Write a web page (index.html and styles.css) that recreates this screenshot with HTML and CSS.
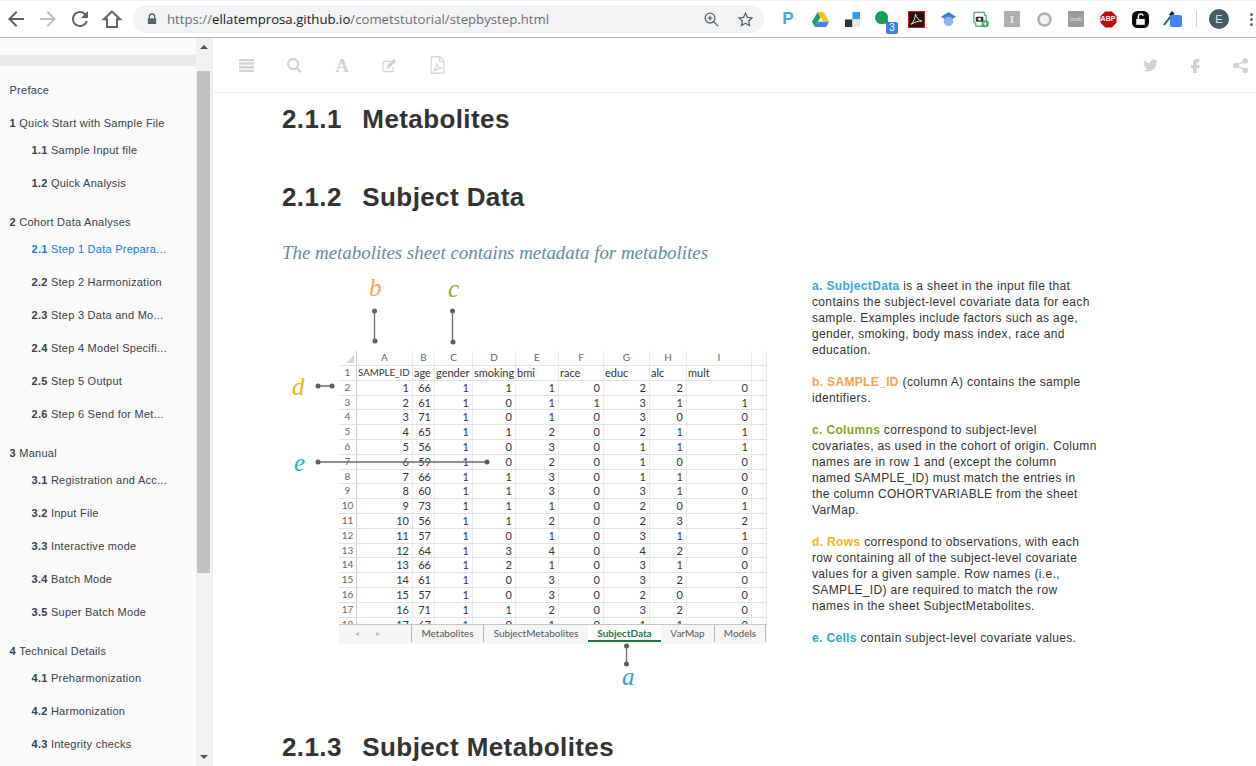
FILE: index.html
```html
<!DOCTYPE html>
<html lang="en">
<head>
    <meta charset="UTF-8">
    <meta name="viewport" content="width=device-width, initial-scale=1.0">
    <title>Step by step</title>
    <link rel="stylesheet" href="styles.css">
</head>
<body>
    <header class="browser-bar">
        <div class="nav-buttons">
            <svg class="nav-icon" viewBox="0 0 24 24"><path d="M20 11H7.83l5.59-5.59L12 4l-8 8 8 8 1.41-1.41L7.83 13H20v-2z"/></svg>
            <svg class="nav-icon nav-off" viewBox="0 0 24 24"><path d="M4 11h12.17l-5.59-5.59L12 4l8 8-8 8-1.41-1.41L16.17 13H4v-2z"/></svg>
            <svg class="nav-icon" viewBox="0 0 24 24"><path d="M17.65 6.35A7.958 7.958 0 0 0 12 4c-4.42 0-7.99 3.58-7.99 8s3.57 8 7.99 8c3.73 0 6.84-2.55 7.73-6h-2.08A5.99 5.99 0 0 1 12 18c-3.31 0-6-2.69-6-6s2.69-6 6-6c1.66 0 3.14.69 4.22 1.78L13 11h7V4l-2.35 2.35z"/></svg>
            <svg class="nav-icon" viewBox="0 0 24 24"><path class="home-line" d="M12 4.5 3.8 12.2H7V20h10v-7.8h3.2z"/></svg>
        </div>
        <div class="omnibox">
            <svg class="lock" viewBox="0 0 12 14"><path d="M2 6V4.2a4 4 0 0 1 8 0V6h1v7H1V6zm1.6 0h4.8V4.2a2.4 2.4 0 0 0-4.8 0z"/></svg>
            <span class="url"><span class="url-dim">https://</span>ellatemprosa.github.io<span class="url-dim">/cometstutorial/stepbystep.html</span></span>
            <svg class="omni-icon omni-zoom" viewBox="0 0 18 18"><circle cx="7.5" cy="7.5" r="5.2"/><path d="M11.4 11.4 16 16M5 7.5h5M7.5 5v5"/></svg>
            <svg class="omni-icon" viewBox="0 0 24 24"><path d="M12 3l2.8 5.9 6.4.8-4.7 4.4 1.2 6.4L12 17.3l-5.7 3.2 1.2-6.4-4.7-4.4 6.4-.8z"/></svg>
        </div>
        <div class="extensions">
            <span class="ext ext-p">P</span>
            <span class="ext"><svg viewBox="0 0 18 16"><path fill="#1ea362" d="M6 0 0 10.5 3 16l6-10.500z"/><path fill="#ffc107" d="M6 0h6l6 10.500h-6z"/><path fill="#4285f4" d="M3 16h12l3-5.500H6z"/></svg></span>
            <span class="ext"><svg viewBox="0 0 18 18"><rect x="9" y="1" width="8" height="8" fill="#2f9bf5"/><rect x="1" y="9" width="8" height="8" fill="#333"/><rect x="9" y="9" width="8" height="8" fill="#e6e8ea"/></svg></span>
            <span class="ext"><svg class="ext-green" viewBox="0 0 16 16"><circle cx="7" cy="7" r="7" fill="#159e58"/><path d="M9 12l5 4V9z" fill="#159e58"/></svg><b class="ext-badge">3</b></span>
            <span class="ext"><svg viewBox="0 0 16 16"><rect x=".5" y=".5" width="15" height="15" fill="#2b1210" stroke="#b3261a"/><path d="M3 12.500C5 11 7 6 7 3c1 3 2.500 5.500 6 6.500-3 0-6 .5-10 3z" fill="none" stroke="#eee" stroke-width=".9"/></svg></span>
            <span class="ext"><svg viewBox="0 0 18 18"><path fill="#3f7de0" d="M9 1l8 5-8 5-8-5z"/><circle cx="9" cy="11" r="5" fill="#8fb2ee"/></svg></span>
            <span class="ext"><svg viewBox="0 0 18 18"><path d="M2 1.500h11v2.500l2 1v6M13 16H4V13L2 12V1.500" fill="none" stroke="#3bab62" stroke-width="1.200"/><rect x="4" y="6" width="8" height="5.500" rx="1" fill="#333"/><circle cx="8" cy="8.700" r="1.500" fill="#fff"/><circle cx="14" cy="13.500" r="3.800" fill="#2fa65a"/><path d="M14 11.500v4M12 13.500h4" stroke="#fff" stroke-width="1.200"/></svg></span>
            <span class="ext"><i class="ext-box">I</i></span>
            <span class="ext"><svg viewBox="0 0 16 16"><circle cx="8" cy="8" r="5.700" fill="#f1f1f1" stroke="#b0b0b0" stroke-width="2.400"/></svg></span>
            <span class="ext"><i class="ext-box ext-md">(md)</i></span>
            <span class="ext"><svg viewBox="0 0 18 18"><path fill="#c20a0a" d="M5.500.5h7l5 5v7l-5 5h-7l-5-5v-7z"/></svg><b class="ext-abp">ABP</b></span>
            <span class="ext"><svg viewBox="0 0 16 16"><rect width="16" height="16" rx="5" fill="#0b0b0b"/><rect x="4" y="7.500" width="8" height="5.500" fill="#fff"/><path d="M6 7.500V5a2.300 2.300 0 0 1 4.500-.5" fill="none" stroke="#fff" stroke-width="1.300"/></svg></span>
            <span class="ext"><svg class="ext-dropper" viewBox="0 0 12 16"><path d="M1 15 8 6" stroke="#2d6a3f" stroke-width="2"/><path d="M6 4.500 9 1l2.500 2.500L8.500 7z" fill="#222"/></svg><b class="ext-blue"></b></span>
            <span class="ext-sep"></span>
            <span class="avatar">E</span>
            <span class="menu-dots"><i></i><i></i><i></i></span>
        </div>
    </header>

    <div class="page">
        <nav class="sidebar">
            <div class="toc">
                <div class="toc-band"></div>
                <a class="chapter">Preface</a>
                <a class="chapter"><b>1</b> Quick Start with Sample File</a>
                <a class="section"><b>1.1</b> Sample Input file</a>
                <a class="section"><b>1.2</b> Quick Analysis</a>
                <a class="chapter"><b>2</b> Cohort Data Analyses</a>
                <a class="section active"><b>2.1</b> Step 1 Data Prepara...</a>
                <a class="section"><b>2.2</b> Step 2 Harmonization</a>
                <a class="section"><b>2.3</b> Step 3 Data and Mo...</a>
                <a class="section"><b>2.4</b> Step 4 Model Specifi...</a>
                <a class="section"><b>2.5</b> Step 5 Output</a>
                <a class="section"><b>2.6</b> Step 6 Send for Met...</a>
                <a class="chapter"><b>3</b> Manual</a>
                <a class="section"><b>3.1</b> Registration and Acc...</a>
                <a class="section"><b>3.2</b> Input File</a>
                <a class="section"><b>3.3</b> Interactive mode</a>
                <a class="section"><b>3.4</b> Batch Mode</a>
                <a class="section"><b>3.5</b> Super Batch Mode</a>
                <a class="chapter"><b>4</b> Technical Details</a>
                <a class="section"><b>4.1</b> Preharmonization</a>
                <a class="section"><b>4.2</b> Harmonization</a>
                <a class="section"><b>4.3</b> Integrity checks</a>
            </div>
            <div class="scrollbar">
                <span class="arrow-up"></span>
                <span class="thumb"></span>
                <span class="arrow-down"></span>
            </div>
        </nav>

        <main class="book">
            <div class="book-bar">
                <div class="bar-group">
                    <svg class="bar-icon" viewBox="0 0 16 14"><path d="M0 0h16v2.500H0zM0 3.800h16v2.500H0zM0 7.600h16v2.500H0zM0 11.400h16v2.500H0z"/></svg>
                    <svg class="bar-icon" viewBox="0 0 16 16"><path fill-rule="evenodd" d="M6.500 0a6.500 6.500 0 0 1 5.200 10.400l4 4-1.700 1.600-4-4A6.500 6.500 0 1 1 6.500 0zm0 2.300a4.200 4.200 0 1 0 0 8.400 4.200 4.200 0 0 0 0-8.400z"/></svg>
                    <span class="bar-letter">A</span>
                    <svg class="bar-icon" viewBox="0 0 16 16"><path d="M12 9.500V13a1.500 1.500 0 0 1-1.500 1.500h-8A1.500 1.500 0 0 1 1 13V5a1.500 1.500 0 0 1 1.500-1.500H9" fill="none" stroke="#d2d2d2" stroke-width="1.300"/><path d="M5.500 8 12.500 1l2.500 2.500-7 7-3 .5z"/></svg>
                    <svg class="bar-icon bar-pdf" viewBox="0 0 14 17"><path d="M1 .8h8l4 4v11.400H1z" fill="none" stroke="#d2d2d2" stroke-width="1.100"/><path d="M9 1v4h4M3 14c2-1.500 3-4 3.200-7 .6 2.500 2 4 4.800 4.500-3 0-5.500 1-8 2.500z" fill="none" stroke="#d2d2d2"/></svg>
                </div>
                <div class="bar-group bar-right">
                    <svg class="bar-icon" viewBox="0 0 24 24"><path d="M23.953 4.570a10 10 0 0 1-2.825.775 4.958 4.958 0 0 0 2.163-2.723c-.951.555-2.005.959-3.127 1.184a4.920 4.920 0 0 0-8.384 4.482C7.690 8.095 4.067 6.130 1.640 3.162a4.822 4.822 0 0 0-.666 2.475c0 1.710.870 3.213 2.188 4.096a4.904 4.904 0 0 1-2.228-.616v.060a4.923 4.923 0 0 0 3.946 4.827 4.996 4.996 0 0 1-2.212.085 4.936 4.936 0 0 0 4.604 3.417 9.867 9.867 0 0 1-6.102 2.105c-.390 0-.779-.023-1.170-.067a13.995 13.995 0 0 0 7.557 2.209c9.053 0 13.998-7.496 13.998-13.985 0-.210 0-.420-.015-.630A9.935 9.935 0 0 0 24 4.590z"/></svg>
                    <svg class="bar-icon" viewBox="0 0 24 24"><path d="M14 7h4V1h-4c-3.500 0-6 2.600-6 6v4H5v5h3v8h6v-8h4l.7-5H14V8c0-.6.400-1 1-1z"/></svg>
                    <svg class="bar-icon" viewBox="0 0 16 16"><circle cx="13" cy="3" r="3"/><circle cx="3" cy="8" r="3"/><circle cx="13" cy="13" r="3"/><path d="M13 3 3 8l10 5" fill="none" stroke="#d2d2d2" stroke-width="1.500"/></svg>
                </div>
            </div>

            <div class="book-body">
                <h2 class="first">2.1.1<span class="num-gap"></span>Metabolites</h2>
                <h2>2.1.2<span class="num-gap"></span>Subject Data</h2>
                <p class="lead">The metabolites sheet contains metadata for metabolites</p>

                <div class="explainer">
                    <figure class="figure">
                        <span class="tag tag-a">a</span>
                        <span class="tag tag-b">b</span>
                        <span class="tag tag-c">c</span>
                        <span class="tag tag-d">d</span>
                        <span class="tag tag-e">e</span>

                        <div class="sheet">
                            <div class="sheet-grid">
                                <div class="row head"><span class="rh corner"></span><span>A</span><span>B</span><span>C</span><span>D</span><span>E</span><span>F</span><span>G</span><span>H</span><span>I</span><span></span></div>
                                <div class="row names"><span class="rh">1</span><span class="caps">SAMPLE_ID</span><span>age</span><span>gender</span><span>smoking</span><span>bmi</span><span>race</span><span>educ</span><span>alc</span><span>mult</span><span></span></div>
                                <div class="row"><span class="rh">2</span><span>1</span><span>66</span><span>1</span><span>1</span><span>1</span><span>0</span><span>2</span><span>2</span><span>0</span><span></span></div>
                                <div class="row"><span class="rh">3</span><span>2</span><span>61</span><span>1</span><span>0</span><span>1</span><span>1</span><span>3</span><span>1</span><span>1</span><span></span></div>
                                <div class="row"><span class="rh">4</span><span>3</span><span>71</span><span>1</span><span>0</span><span>1</span><span>0</span><span>3</span><span>0</span><span>0</span><span></span></div>
                                <div class="row"><span class="rh">5</span><span>4</span><span>65</span><span>1</span><span>1</span><span>2</span><span>0</span><span>2</span><span>1</span><span>1</span><span></span></div>
                                <div class="row"><span class="rh">6</span><span>5</span><span>56</span><span>1</span><span>0</span><span>3</span><span>0</span><span>1</span><span>1</span><span>1</span><span></span></div>
                                <div class="row"><span class="rh">7</span><span>6</span><span>59</span><span>1</span><span>0</span><span>2</span><span>0</span><span>1</span><span>0</span><span>0</span><span></span></div>
                                <div class="row"><span class="rh">8</span><span>7</span><span>66</span><span>1</span><span>1</span><span>3</span><span>0</span><span>1</span><span>1</span><span>0</span><span></span></div>
                                <div class="row"><span class="rh">9</span><span>8</span><span>60</span><span>1</span><span>1</span><span>3</span><span>0</span><span>3</span><span>1</span><span>0</span><span></span></div>
                                <div class="row"><span class="rh">10</span><span>9</span><span>73</span><span>1</span><span>1</span><span>1</span><span>0</span><span>2</span><span>0</span><span>1</span><span></span></div>
                                <div class="row"><span class="rh">11</span><span>10</span><span>56</span><span>1</span><span>1</span><span>2</span><span>0</span><span>2</span><span>3</span><span>2</span><span></span></div>
                                <div class="row"><span class="rh">12</span><span>11</span><span>57</span><span>1</span><span>0</span><span>1</span><span>0</span><span>3</span><span>1</span><span>1</span><span></span></div>
                                <div class="row"><span class="rh">13</span><span>12</span><span>64</span><span>1</span><span>3</span><span>4</span><span>0</span><span>4</span><span>2</span><span>0</span><span></span></div>
                                <div class="row"><span class="rh">14</span><span>13</span><span>66</span><span>1</span><span>2</span><span>1</span><span>0</span><span>3</span><span>1</span><span>0</span><span></span></div>
                                <div class="row"><span class="rh">15</span><span>14</span><span>61</span><span>1</span><span>0</span><span>3</span><span>0</span><span>3</span><span>2</span><span>0</span><span></span></div>
                                <div class="row"><span class="rh">16</span><span>15</span><span>57</span><span>1</span><span>0</span><span>3</span><span>0</span><span>2</span><span>0</span><span>0</span><span></span></div>
                                <div class="row"><span class="rh">17</span><span>16</span><span>71</span><span>1</span><span>1</span><span>2</span><span>0</span><span>3</span><span>2</span><span>0</span><span></span></div>
                                <div class="row"><span class="rh">18</span><span>17</span><span>67</span><span>1</span><span>0</span><span>1</span><span>0</span><span>1</span><span>1</span><span>0</span><span></span></div>
                            </div>
                            <div class="tabs">
                                <span class="tab-nav"><i>&#9666;</i><i>&#9656;</i></span>
                                <span class="tab tab-metabolites">Metabolites</span>
                                <span class="tab tab-subjectmeta">SubjectMetabolites</span>
                                <span class="tab tab-active">SubjectData</span>
                                <span class="tab tab-varmap">VarMap</span>
                                <span class="tab tab-models">Models</span>
                            </div>
                        </div>

                        <!-- callout lines, in figure coordinates -->
                        <svg class="callouts" viewBox="0 0 530 425">
                            <path d="M92.500 42v30M170.500 42v31M36 117h14M36 193h169M344.500 377v18"/>
                            <circle cx="92.500" cy="42" r="2.500"/><circle cx="93" cy="72" r="2.500"/>
                            <circle cx="170.500" cy="42" r="2.500"/><circle cx="171" cy="73" r="2.500"/>
                            <circle cx="36" cy="117" r="2.500"/><circle cx="50" cy="117" r="2.500"/>
                            <circle cx="36" cy="193" r="2.500"/><circle cx="205" cy="193" r="2.500"/>
                            <circle cx="344.500" cy="377" r="2.500"/><circle cx="344.500" cy="395" r="2.500"/>
                        </svg>
                    </figure>

                    <div class="notes">
                        <p><b class="c-a">a. SubjectData</b> is a sheet in the input file that contains the subject-level covariate data for each sample. Examples include factors such as age, gender, smoking, body mass index, race and education.</p>
                        <p><b class="c-b">b. SAMPLE_ID</b> (column A) contains the sample identifiers.</p>
                        <p><b class="c-c">c. Columns</b> correspond to subject-level covariates, as used in the cohort of origin. Column names are in row 1 and (except the column named SAMPLE_ID) must match the entries in<br>the column COHORTVARIABLE from the sheet VarMap.</p>
                        <p><b class="c-d">d. Rows</b> correspond to observations, with each row containing all of the subject-level covariate values for a given sample. Row names (i.e., SAMPLE_ID) are required to match the row names in the sheet SubjectMetabolites.</p>
                        <p><b class="c-e">e. Cells</b> contain subject-level covariate values.</p>
                    </div>
                </div>

                <h2 class="next">2.1.3<span class="num-gap"></span>Subject Metabolites</h2>
            </div>
        </main>
    </div>
</body>
</html>
```

FILE: styles.css
```css
* {
    box-sizing: border-box;
}
html, body {
    margin: 0;
    height: 100%;
    overflow: hidden;
}
body {
    background-color: white;
    color: #333;
    font-family: "Liberation Sans", Arial, sans-serif;
    display: flex;
    flex-direction: column;
}

/* browser toolbar */
.browser-bar {
    height: 38px;
    flex: none;
    display: flex;
    align-items: center;
    border-bottom: 1px solid #b4b4b4;
    border-top: 1px solid #eef0f4;
}
.nav-buttons {
    width: 133px;
    flex: none;
    display: flex;
    gap: 8px;
    padding-left: 4px;
}
.nav-icon {
    width: 24px;
    height: 24px;
    fill: #5f6368;
}
.nav-off {
    fill: #bdc1c6;
}
.home-line {
    fill: none;
    stroke: #5f6368;
    stroke-width: 2;
}
.omnibox {
    width: 631px;
    height: 28px;
    flex: none;
    display: flex;
    align-items: center;
    background-color: #f1f3f4;
    border-radius: 14px;
    padding-left: 14px;
}
.lock {
    width: 10px;
    height: 12px;
    fill: #5f6368;
}
.url {
    flex: 1;
    margin-left: 10px;
    font-family: "Open Sans", sans-serif;
    font-size: 13.2px;
    color: #202124;
    white-space: nowrap;
}
.url-dim {
    color: #6b6f74;
}
.omni-icon {
    width: 17px;
    height: 17px;
    margin-right: 10px;
    fill: none;
    stroke: #5f6368;
    stroke-width: 1.8;
}
.omni-zoom {
    margin-right: 17px;
    stroke-width: 1.400;
}
.extensions {
    flex: 1;
    display: flex;
    align-items: center;
    padding-left: 8px;
}
.ext {
    position: relative;
    width: 32px;
    height: 20px;
    flex: none;
    display: flex;
    align-items: center;
    justify-content: center;
}
.ext svg {
    width: 17px;
    height: 17px;
}
.ext-p {
    color: #45a7e0;
    font-size: 17px;
    font-weight: bold;
}
.ext svg.ext-green {
    width: 15px;
    height: 15px;
    margin: -2px 3px 0 0;
}
.ext-badge {
    position: absolute;
    right: 2px;
    bottom: -5px;
    width: 12px;
    height: 12px;
    background-color: #3f7de8;
    border-radius: 2px;
    color: white;
    font-size: 10px;
    font-weight: normal;
    text-align: center;
    line-height: 12px;
}
.ext-box {
    width: 16px;
    height: 16px;
    background-color: #b0b0b0;
    border-radius: 1px;
    color: #eee;
    font: bold 11px/16px "Liberation Serif", serif;
    text-align: center;
}
.ext-md {
    background-color: #9a9a9a;
    font: 6px/16px "Liberation Sans", sans-serif;
}
.ext-abp {
    position: absolute;
    left: 0;
    right: 0;
    top: 5px;
    color: white;
    font-size: 7px;
    line-height: 10px;
    text-align: center;
}
.ext svg.ext-dropper {
    width: 12px;
    height: 16px;
    margin: -3px 6px 0 0;
}
.ext-blue {
    position: absolute;
    left: 14px;
    top: 6px;
    width: 12px;
    height: 12px;
    background-color: #4285f4;
    border-radius: 2px;
}
.ext-sep {
    width: 1px;
    height: 16px;
    background-color: #ccc;
    margin: 0 12px 0 8px;
    flex: none;
}
.avatar {
    width: 20px;
    height: 20px;
    flex: none;
    border-radius: 50%;
    background-color: #455a64;
    color: #e4e8ea;
    font-size: 11px;
    line-height: 20px;
    text-align: center;
}
.menu-dots {
    display: flex;
    flex-direction: column;
    gap: 2px;
    margin-left: 21px;
}
.menu-dots i {
    width: 3px;
    height: 3px;
    border-radius: 50%;
    background-color: #5f6368;
}

.page {
    flex: 1;
    min-height: 0;
    display: flex;
}

/* left table of contents */
.sidebar {
    width: 213px;
    flex: none;
    display: flex;
    background-color: #fafafa;
    border-right: 1px solid #eee;
    overflow: hidden;
}
.toc {
    width: 196px;
    flex: none;
    padding-top: 17px;
    font-size: 11px;
    letter-spacing: 0.26px;
    color: #364149;
}
.toc-band {
    height: 11px;
    background-color: #e8e8e8;
    margin-bottom: 13.5px;
}
.chapter, .section {
    display: flex;
    align-items: center;
    white-space: pre-wrap;
}
.chapter {
    height: 21px;
    margin-bottom: 12px;
    padding-left: 9.5px;
}
.section {
    height: 33px;
    padding-left: 31.5px;
}
.section + .chapter {
    margin-top: 12px;
}
.chapter:has(+ .section) {
    margin-bottom: 0;
}
.active {
    color: #0f7ae5;
}
.scrollbar {
    width: 16px;
    flex: none;
    display: flex;
    flex-direction: column;
    align-items: center;
    background-color: #f1f1f1;
}
.arrow-up, .arrow-down {
    width: 0;
    height: 0;
    flex: none;
    border-left: 4px solid transparent;
    border-right: 4px solid transparent;
}
.arrow-up {
    border-bottom: 4px solid #505050;
    margin-top: 7px;
}
.arrow-down {
    border-top: 4px solid #505050;
    margin-top: 182px;
}
.thumb {
    width: 13px;
    height: 502px;
    flex: none;
    margin-top: 22px;
    background-color: #c1c1c1;
    align-self: flex-start;
    margin-left: 1px;
}

/* book content */
.book {
    flex: 1;
    min-width: 0;
    overflow: hidden;
}
.book-bar {
    height: 55px;
    display: flex;
    justify-content: space-between;
    align-items: center;
    border-bottom: 1px solid #eee;
}
.bar-group {
    display: flex;
    align-items: center;
    gap: 32.75px;
    padding-left: 26px;
}
.bar-right {
    gap: 30px;
    padding: 0 8px 0 0;
}
.bar-icon {
    width: 15px;
    height: 15px;
    fill: #d2d2d2;
}
.bar-pdf {
    height: 18px;
}
.bar-letter {
    width: 15px;
    color: #d2d2d2;
    font: bold 19px/19px "Liberation Serif", serif;
    text-align: center;
}
.book-body {
    padding-left: 69px;
}
h2 {
    margin: 43px 0 0;
    font-size: 26px;
    line-height: 35px;
    font-weight: bold;
    letter-spacing: 0.4px;
    color: #333;
}
h2.first {
    margin-top: 9px;
}
h2.next {
    margin-top: 36px;
}
.num-gap {
    display: inline-block;
    width: 20.5px;
}
.lead {
    margin: 25px 0 0;
    font: italic 18.900px/26px "Liberation Serif", serif;
    color: #5f8ea3;
}

.explainer {
    display: flex;
    margin-top: 3px;
}
.figure {
    position: relative;
    width: 530px;
    height: 425px;
    flex: none;
    margin: 0;
    padding: 82px 0 0 57px;
}
.tag {
    position: absolute;
    font: italic 25px/26px "Liberation Serif", serif;
}
.tag-a { left: 340px; top: 395px; color: #35a0dc; }
.tag-b { left: 87px; top: 6px; color: #f9a24b; }
.tag-c { left: 166px; top: 7px; color: #8db02a; }
.tag-d { left: 10px; top: 105px; color: #eeb60f; }
.tag-e { left: 12px; top: 181px; color: #1cb5c9; }
.callouts {
    position: absolute;
    left: 0;
    top: 0;
    width: 530px;
    height: 425px;
    fill: #5e5e5e;
}
.callouts path {
    fill: none;
    stroke: #6a6a6a;
    stroke-width: 1.300;
}

/* spreadsheet picture */
.sheet {
    width: 428px;
    font-family: Lato, sans-serif;
    font-size: 11px;
    color: #333;
}
.sheet-grid {
    height: 273px;
    overflow: hidden;
}
.row {
    display: grid;
    grid-template-columns: 18px 56px 22px 38px 43px 43px 45px 46px 37px 65px 15px;
    height: 14.800px;
    line-height: 13.800px;
    border-bottom: 1px solid #e3e3e3;
}
.row span {
    padding-right: 3px;
    text-align: right;
    border-right: 1px solid #ececec;
    white-space: nowrap;
    overflow: hidden;
}
.row .rh {
    padding: 0;
    font-size: 10px;
    text-align: center;
    color: #666;
    border-right: 1px solid #cfcfcf;
}
.head {
    height: 15px;
    color: #666;
}
.head span {
    padding: 0;
    font-size: 10px;
    text-align: center;
}
.names span {
    padding: 0 0 0 1px;
    text-align: left;
}
.names .caps {
    font-size: 9.700px;
}
.corner {
    position: relative;
}
.corner::after {
    content: "";
    position: absolute;
    right: 2px;
    bottom: 2px;
    border-left: 8px solid transparent;
    border-bottom: 8px solid #d8d8d8;
}
.tabs {
    height: 20px;
    display: flex;
    align-items: stretch;
    background-color: #f5f5f5;
    border-top: 1px solid #c4c4c4;
    font-size: 10px;
    line-height: 17px;
    color: #555;
}
.tab-nav {
    width: 72px;
    flex: none;
    display: flex;
    gap: 17px;
    padding-left: 16px;
    font-size: 8px;
    color: #bbb;
}
.tab-nav i {
    font-style: normal;
}
.tab {
    flex: none;
    height: 17px;
    text-align: center;
    border-left: 1px solid #b5b5b5;
}
.tab-metabolites { width: 72px; }
.tab-subjectmeta { width: 105px; }
.tab-active {
    width: 73px;
    background-color: white;
    border: none;
    border-bottom: 2px solid #217346;
    color: #217346;
    font-weight: bold;
}
.tab-varmap { width: 53px; border-left: none; }
.tab-models {
    width: 52px;
    border-right: 1px solid #b5b5b5;
}

/* notes beside the figure */
.notes {
    width: 286px;
    flex: none;
    padding-top: 9px;
    font-size: 12px;
    line-height: 16px;
    letter-spacing: 0.35px;
    color: #333;
}
.notes p {
    margin: 0 0 16px;
}
.c-a { color: #3ba6dc; }
.c-b { color: #f9a24b; }
.c-c { color: #82a81c; }
.c-d { color: #eeb60f; }
.c-e { color: #1cb0c4; }
```
